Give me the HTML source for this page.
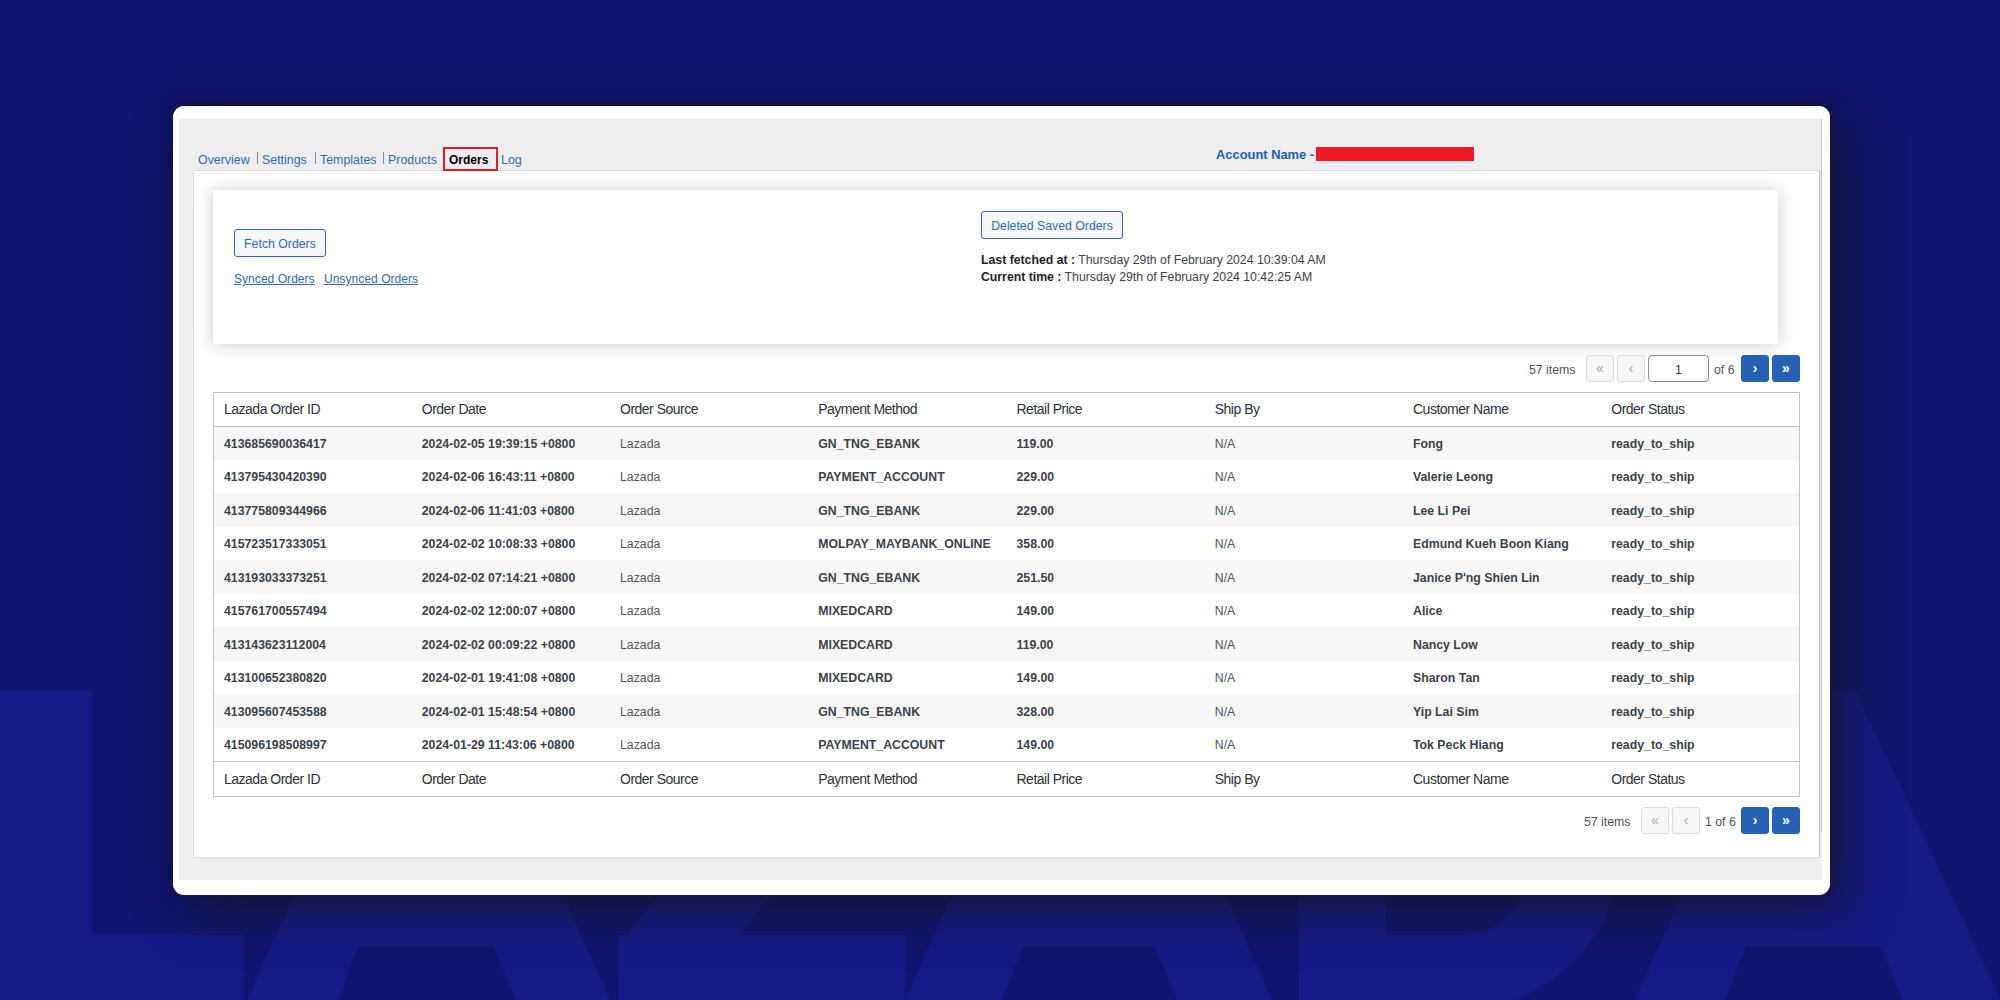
<!DOCTYPE html>
<html><head><meta charset="utf-8">
<style>
*{margin:0;padding:0;box-sizing:border-box}
html,body{width:2000px;height:1000px;overflow:hidden}
body{background:#0f156e;font-family:"Liberation Sans",sans-serif;position:relative;color:#3c434a}
.abs{position:absolute}
#bg{position:absolute;left:0;top:0}
#card{left:173px;top:106px;width:1657px;height:789px;background:#fff;border-radius:11px;box-shadow:16px 16px 50px rgba(25,20,50,.9),0 -2px 14px rgba(20,18,45,.6)}
#gray{left:179px;top:119px;width:1643px;height:761px;background:#eeeef1}
#content{left:193px;top:170px;width:1627px;height:688px;background:#fff;border:1px solid #dcdcde;border-right-color:#c3c4c7}
.nav{top:152px;font-size:12.4px;color:#316cba;white-space:nowrap;line-height:16px}
.sep{top:152px;width:1px;height:12px;background:#8c8f94}
#orders{left:443px;top:147px;width:55px;height:24px;border:2px solid #e11b22}
.acct{left:1216px;top:147px;font-size:12.9px;font-weight:bold;color:#1862b0;line-height:16px;white-space:nowrap}
#red{left:1316px;top:147px;width:158px;height:14px;background:#ed1c24}
#panel{left:213px;top:190px;width:1565px;height:154px;background:#fff;box-shadow:0 1px 16px rgba(0,0,0,.2)}
.btn{border:1px solid #316cba;border-radius:3px;background:#f6f7f7;color:#316cba;font-size:12.3px;line-height:26px;text-align:center;white-space:nowrap}
.link{font-size:12.1px;color:#316cba;text-decoration:underline;white-space:nowrap;line-height:16px}
.info{font-size:12.27px;color:#3c434a;white-space:nowrap;line-height:17px}
.info b{color:#1d2327}
.pg{font-size:12.3px;color:#50575e;white-space:nowrap;line-height:16px}
.pb{width:28px;height:27px;border-radius:3px;text-align:center;font-size:14px;font-weight:bold;line-height:25px}
.pb.dis{border:1px solid #dcdcde;background:#f6f7f7;color:#a7aaad;font-weight:normal}
.pb.act{background:#2761b5;color:#fff;border:1px solid #2761b5}
#pinput{left:1648px;top:355px;width:61px;height:27px;border:1px solid #8c8f94;border-radius:4px;background:#fff;text-align:center;font-size:12.3px;line-height:28px;color:#2c3338}
table{position:absolute;left:213px;top:392px;width:1587px;border-collapse:collapse;border:1px solid #c3c4c7;table-layout:fixed;background:#fff}
td,th{height:33.5px;padding:2px 0 0 10px;text-align:left;white-space:nowrap;overflow:hidden;vertical-align:middle}
th{font-weight:normal;font-size:14px;letter-spacing:-0.5px;color:#2c3338}
thead th,tfoot th{padding-top:0}
thead th{border-bottom:1px solid #c3c4c7}
tfoot th{border-top:1px solid #c3c4c7;height:35px}
tbody tr:nth-child(odd){background:#f7f7f7}
td{font-size:12.3px;font-weight:bold;color:#3c434a}
td.n{font-weight:normal;color:#50575e}
</style></head><body>
<svg id="bg" width="2000" height="1000" viewBox="0 0 2000 1000">
 <g fill="#131a86">
  <path d="M-50 690H92V935H244V1020H-50Z"/>
  <path fill-rule="evenodd" d="M238 1020L386 690H471L619 1020Z M332 1020L358 946H493L525 1020Z"/>
  <path d="M640 690H905V760H887L730 945H618L775 760H640Z M618 935H905V1020H618Z"/>
  <path fill-rule="evenodd" d="M896 1020L1044 690H1133L1281 1020Z M994 1020L1023 946H1155L1185 1020Z"/>
  <path fill-rule="evenodd" d="M1299 690H1440A180 162.5 0 0 1 1440 1015H1299Z M1386 770H1460A70 70 0 0 1 1530 840V865A70 70 0 0 1 1460 935H1386Z"/>
  <path fill-rule="evenodd" d="M1626 1020L1774 690H1855L2010 1020Z M1717 1020L1746 946H1881L1910 1020Z"/>
 </g>
</svg>
<div id="card" class="abs"></div>
<div id="gray" class="abs"></div>
<div id="content" class="abs"></div>
<div class="abs" style="left:1821px;top:119px;width:1px;height:713px;background:#c8c8ca"></div>

<div class="abs nav" style="left:198px">Overview</div>
<div class="abs sep" style="left:257px"></div>
<div class="abs nav" style="left:262px">Settings</div>
<div class="abs sep" style="left:315px"></div>
<div class="abs nav" style="left:320px">Templates</div>
<div class="abs sep" style="left:383px"></div>
<div class="abs nav" style="left:388px">Products</div>
<div id="orders" class="abs"></div>
<div class="abs nav" style="left:449px;color:#000;font-weight:bold;font-size:12px">Orders</div>
<div class="abs nav" style="left:501px">Log</div>

<div class="abs acct">Account Name -</div>
<div id="red" class="abs"></div>

<div id="panel" class="abs"></div>
<div class="abs btn" style="left:234px;top:229px;width:92px;height:28px;line-height:29px">Fetch Orders</div>
<div class="abs link" style="left:234px;top:271px">Synced Orders</div>
<div class="abs link" style="left:324px;top:271px">Unsynced Orders</div>
<div class="abs btn" style="left:981px;top:211px;width:142px;height:28px;line-height:28px">Deleted Saved Orders</div>
<div class="abs info" style="left:981px;top:252px"><b>Last fetched at :</b> Thursday 29th of February 2024 10:39:04 AM</div>
<div class="abs info" style="left:981px;top:269px"><b>Current time :</b> Thursday 29th of February 2024 10:42:25 AM</div>

<div class="abs pg" style="left:1529px;top:362px">57 items</div>
<div class="abs pb dis" style="left:1586px;top:355px">&laquo;</div>
<div class="abs pb dis" style="left:1617px;top:355px">&lsaquo;</div>
<div id="pinput" class="abs">1</div>
<div class="abs pg" style="left:1714px;top:362px">of 6</div>
<div class="abs pb act" style="left:1741px;top:355px">&rsaquo;</div>
<div class="abs pb act" style="left:1772px;top:355px">&raquo;</div>

<table>
<colgroup><col><col><col><col><col><col><col><col></colgroup>
<thead><tr><th>Lazada Order ID</th><th>Order Date</th><th>Order Source</th><th>Payment Method</th><th>Retail Price</th><th>Ship By</th><th>Customer Name</th><th>Order Status</th></tr></thead>
<tbody>
<tr><td>413685690036417</td><td>2024-02-05 19:39:15 +0800</td><td class="n">Lazada</td><td>GN_TNG_EBANK</td><td>119.00</td><td class="n">N/A</td><td>Fong</td><td>ready_to_ship</td></tr>
<tr><td>413795430420390</td><td>2024-02-06 16:43:11 +0800</td><td class="n">Lazada</td><td>PAYMENT_ACCOUNT</td><td>229.00</td><td class="n">N/A</td><td>Valerie Leong</td><td>ready_to_ship</td></tr>
<tr><td>413775809344966</td><td>2024-02-06 11:41:03 +0800</td><td class="n">Lazada</td><td>GN_TNG_EBANK</td><td>229.00</td><td class="n">N/A</td><td>Lee Li Pei</td><td>ready_to_ship</td></tr>
<tr><td>415723517333051</td><td>2024-02-02 10:08:33 +0800</td><td class="n">Lazada</td><td>MOLPAY_MAYBANK_ONLINE</td><td>358.00</td><td class="n">N/A</td><td>Edmund Kueh Boon Kiang</td><td>ready_to_ship</td></tr>
<tr><td>413193033373251</td><td>2024-02-02 07:14:21 +0800</td><td class="n">Lazada</td><td>GN_TNG_EBANK</td><td>251.50</td><td class="n">N/A</td><td>Janice P'ng Shien Lin</td><td>ready_to_ship</td></tr>
<tr><td>415761700557494</td><td>2024-02-02 12:00:07 +0800</td><td class="n">Lazada</td><td>MIXEDCARD</td><td>149.00</td><td class="n">N/A</td><td>Alice</td><td>ready_to_ship</td></tr>
<tr><td>413143623112004</td><td>2024-02-02 00:09:22 +0800</td><td class="n">Lazada</td><td>MIXEDCARD</td><td>119.00</td><td class="n">N/A</td><td>Nancy Low</td><td>ready_to_ship</td></tr>
<tr><td>413100652380820</td><td>2024-02-01 19:41:08 +0800</td><td class="n">Lazada</td><td>MIXEDCARD</td><td>149.00</td><td class="n">N/A</td><td>Sharon Tan</td><td>ready_to_ship</td></tr>
<tr><td>413095607453588</td><td>2024-02-01 15:48:54 +0800</td><td class="n">Lazada</td><td>GN_TNG_EBANK</td><td>328.00</td><td class="n">N/A</td><td>Yip Lai Sim</td><td>ready_to_ship</td></tr>
<tr><td>415096198508997</td><td>2024-01-29 11:43:06 +0800</td><td class="n">Lazada</td><td>PAYMENT_ACCOUNT</td><td>149.00</td><td class="n">N/A</td><td>Tok Peck Hiang</td><td>ready_to_ship</td></tr>
</tbody>
<tfoot><tr><th>Lazada Order ID</th><th>Order Date</th><th>Order Source</th><th>Payment Method</th><th>Retail Price</th><th>Ship By</th><th>Customer Name</th><th>Order Status</th></tr></tfoot>
</table>

<div class="abs pg" style="left:1584px;top:814px">57 items</div>
<div class="abs pb dis" style="left:1641px;top:807px">&laquo;</div>
<div class="abs pb dis" style="left:1672px;top:807px">&lsaquo;</div>
<div class="abs pg" style="left:1705px;top:814px">1 of 6</div>
<div class="abs pb act" style="left:1741px;top:807px">&rsaquo;</div>
<div class="abs pb act" style="left:1772px;top:807px">&raquo;</div>
</body></html>
